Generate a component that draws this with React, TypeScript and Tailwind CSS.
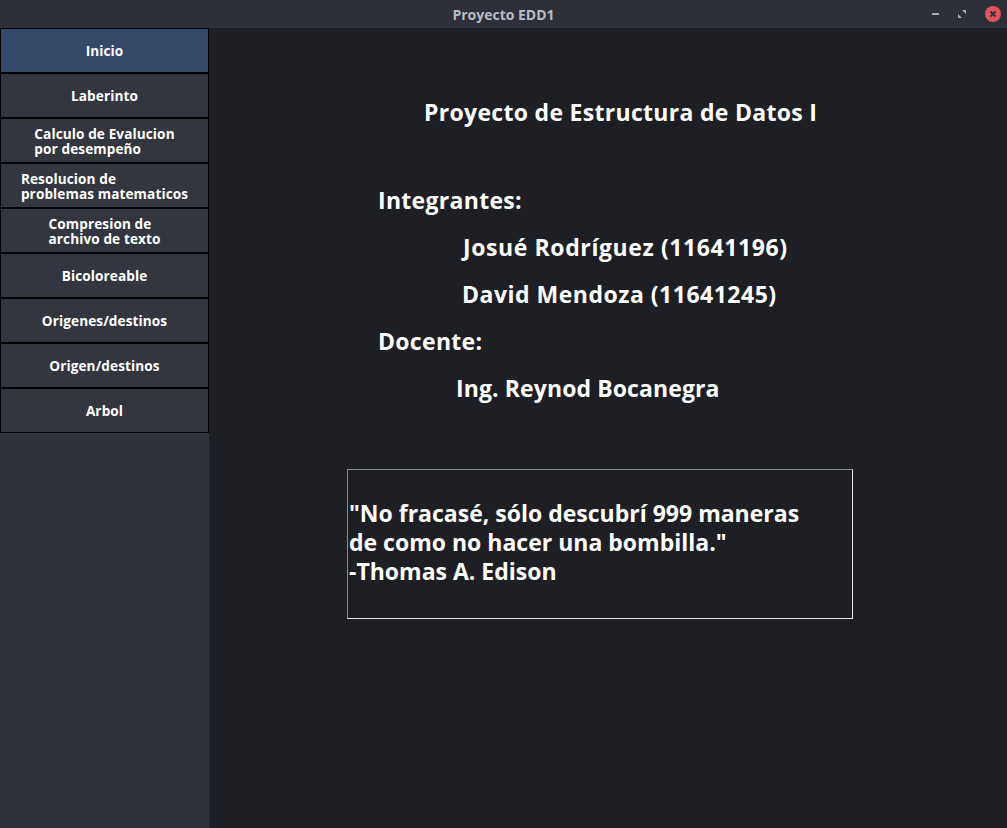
import React from "react";

const MENU: { label: string[] }[] = [
  { label: ["Inicio"] },
  { label: ["Laberinto"] },
  { label: ["Calculo de Evalucion", "por desempeño"] },
  { label: ["Resolucion de", "problemas matematicos"] },
  { label: ["Compresion de", "archivo de texto"] },
  { label: ["Bicoloreable"] },
  { label: ["Origenes/destinos"] },
  { label: ["Origen/destinos"] },
  { label: ["Arbol"] },
];

function TitleBar() {
  return (
    <div className="relative flex h-[28px] items-center justify-center bg-[#2e3039]">
      <span className="text-[14px] font-bold text-[#b9bcc3]">Proyecto EDD1</span>
      <div className="absolute right-[6px] top-0 flex h-full items-center gap-[18px]">
        <div className="h-[2px] w-[7px] bg-[#a8abb2]" />
        <svg width="10" height="10" viewBox="0 0 10 10">
          <path d="M5 1 L9 1 L9 5 Z" fill="#a8abb2" />
          <path d="M1 5 L5 9 L1 9 Z" fill="#a8abb2" />
        </svg>
        <div className="flex h-[16px] w-[16px] items-center justify-center rounded-full bg-[#e0555b]">
          <svg width="8" height="8" viewBox="0 0 8 8">
            <path d="M1.5 1.5 L6.5 6.5 M6.5 1.5 L1.5 6.5" stroke="#2e3039" strokeWidth="1.8" />
          </svg>
        </div>
      </div>
    </div>
  );
}

function Sidebar() {
  return (
    <div className="flex w-[209px] flex-col bg-[#31333c]">
      {MENU.map((item, i) => (
        <button
          key={i}
          type="button"
          className={`flex h-[45px] w-full items-center justify-center border border-black ${
            i === 0 ? "bg-[#36486a]" : "bg-[#33363f]"
          }`}
        >
          <span className="text-left text-[13.6px] font-bold leading-[15px] tracking-[0.1px] text-white">
            {item.label.map((l, j) => (
              <div key={j}>{l}</div>
            ))}
          </span>
        </button>
      ))}
    </div>
  );
}

export default function App() {
  return (
    <div
      className="flex h-[828px] w-[1007px] flex-col overflow-hidden bg-[#1e1f24]"
      style={{ fontFamily: '"Open Sans", "DejaVu Sans", sans-serif' }}
    >
      <TitleBar />
      <div className="flex flex-1">
        <Sidebar />
        <main className="flex-1 bg-[#1e1f24] text-[23px] font-bold leading-[30px] tracking-[0.3px] text-white">
          <div className="pl-[215px] pt-[69px]">Proyecto de Estructura de Datos I</div>
          <div className="mt-[58px] pl-[169px]">Integrantes:</div>
          <div className="mt-[17px] pl-[254px] tracking-[0.6px]">Josué Rodríguez (11641196)</div>
          <div className="mt-[17px] pl-[253px] tracking-[0.5px]">David Mendoza (11641245)</div>
          <div className="mt-[17px] pl-[169px]">Docente:</div>
          <div className="mt-[17px] pl-[247px] tracking-[0.1px]">Ing. Reynod Bocanegra</div>
          <div className="ml-[138px] mt-[66px] flex h-[150px] w-[506px] items-center border border-b-[#e6e8ea] border-l-[#8a8d93] border-r-[#e6e8ea] border-t-[#8a8d93]">
            <p className="pb-[4px] pl-[1px] text-[23px] leading-[29px] tracking-normal">
              "No fracasé, sólo descubrí 999 maneras
              <br />
              de como no hacer una bombilla."
              <br />
              -Thomas A. Edison
            </p>
          </div>
        </main>
      </div>
    </div>
  );
}
